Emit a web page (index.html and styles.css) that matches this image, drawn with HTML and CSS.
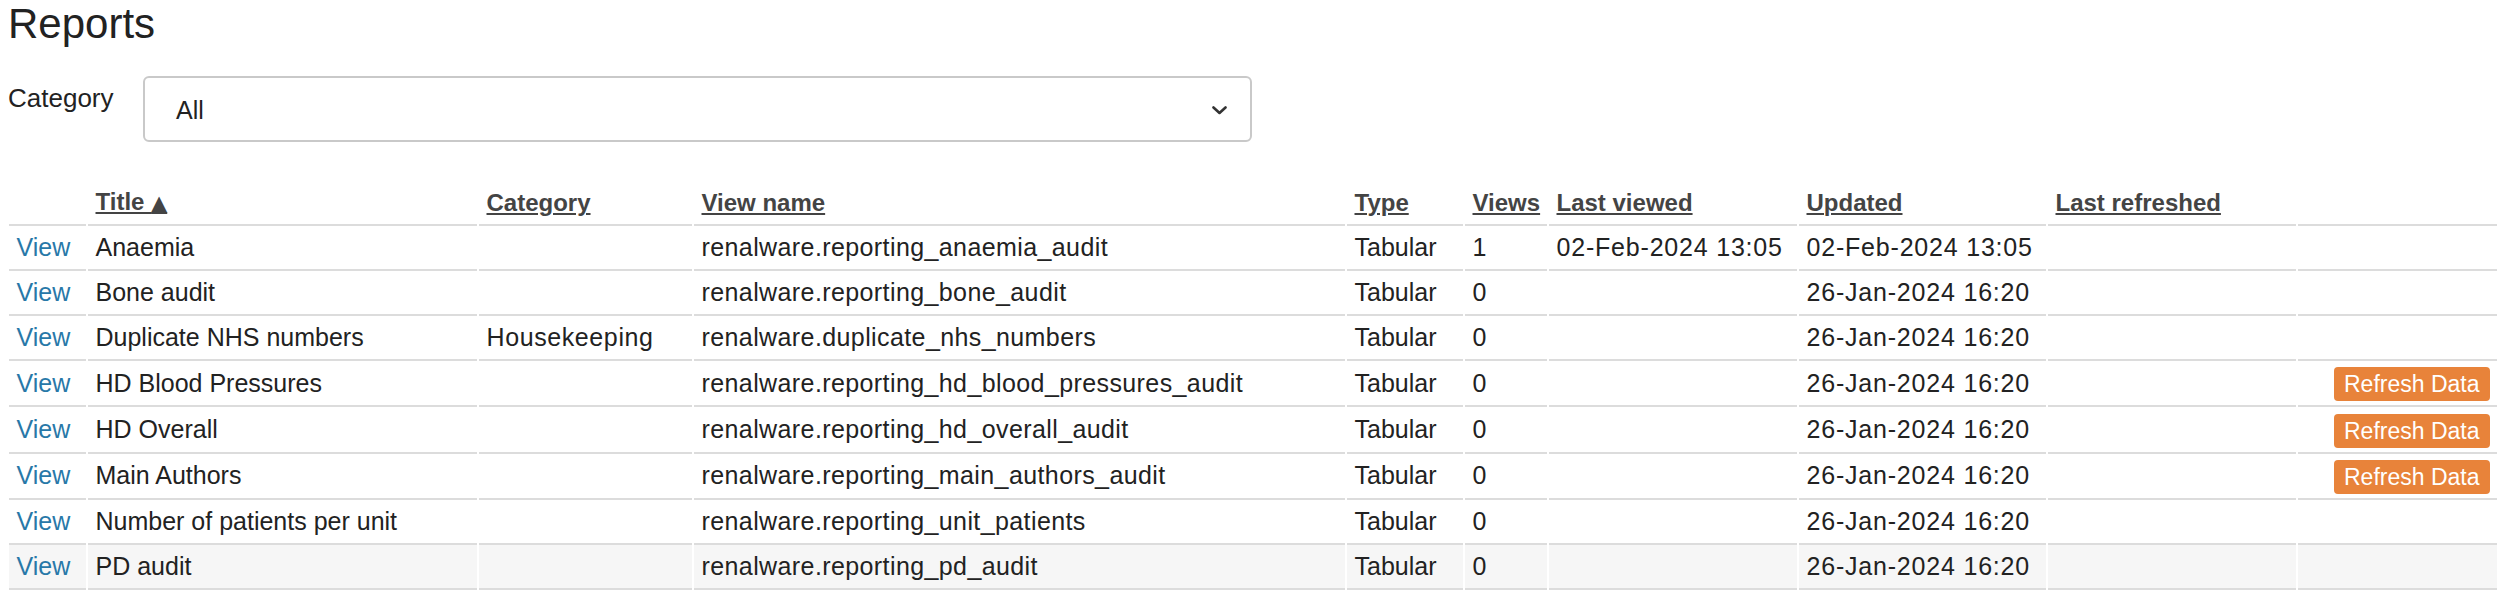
FILE: index.html
```html
<!DOCTYPE html>
<html lang="en">
<head>
<meta charset="utf-8">
<title>Reports</title>
<link rel="stylesheet" href="styles.css">
</head>
<body>
<div class="page">
  <h1 class="page-title">Reports</h1>
  <div class="filter">
    <label class="filter-label">Category</label>
    <div class="select">
      <span class="select-value">All</span>
      <svg class="chevron" width="15" height="9" viewBox="0 0 15 9"><path d="M1.5 1.5 L7.5 7 L13.5 1.5" fill="none" stroke="#333" stroke-width="2.6" stroke-linecap="round" stroke-linejoin="round"/></svg>
    </div>
  </div>
  <table class="reports">
    <thead>
      <tr>
        <th class="c-view"></th>
        <th class="c-title"><a href="#">Title <span class="sort">&#9650;</span></a></th>
        <th class="c-cat"><a href="#">Category</a></th>
        <th class="c-vname"><a href="#">View name</a></th>
        <th class="c-type"><a href="#">Type</a></th>
        <th class="c-views"><a href="#">Views</a></th>
        <th class="c-lview"><a href="#">Last viewed</a></th>
        <th class="c-upd"><a href="#">Updated</a></th>
        <th class="c-lref"><a href="#">Last refreshed</a></th>
        <th class="c-act"></th>
      </tr>
    </thead>
    <tbody>
      <tr>
        <td><a class="link" href="#">View</a></td><td>Anaemia</td><td class="cat"></td><td class="vname">renalware.reporting_anaemia_audit</td><td>Tabular</td><td>1</td><td class="date">02-Feb-2024 13:05</td><td class="date">02-Feb-2024 13:05</td><td></td><td></td>
      </tr>
      <tr>
        <td><a class="link" href="#">View</a></td><td>Bone audit</td><td class="cat"></td><td class="vname">renalware.reporting_bone_audit</td><td>Tabular</td><td>0</td><td></td><td class="date">26-Jan-2024 16:20</td><td></td><td></td>
      </tr>
      <tr>
        <td><a class="link" href="#">View</a></td><td>Duplicate NHS numbers</td><td class="cat">Housekeeping</td><td class="vname">renalware.duplicate_nhs_numbers</td><td>Tabular</td><td>0</td><td></td><td class="date">26-Jan-2024 16:20</td><td></td><td></td>
      </tr>
      <tr>
        <td><a class="link" href="#">View</a></td><td>HD Blood Pressures</td><td class="cat"></td><td class="vname">renalware.reporting_hd_blood_pressures_audit</td><td>Tabular</td><td>0</td><td></td><td class="date">26-Jan-2024 16:20</td><td></td><td class="act"><a class="btn" href="#">Refresh Data</a></td>
      </tr>
      <tr>
        <td><a class="link" href="#">View</a></td><td>HD Overall</td><td class="cat"></td><td class="vname">renalware.reporting_hd_overall_audit</td><td>Tabular</td><td>0</td><td></td><td class="date">26-Jan-2024 16:20</td><td></td><td class="act"><a class="btn" href="#">Refresh Data</a></td>
      </tr>
      <tr>
        <td><a class="link" href="#">View</a></td><td>Main Authors</td><td class="cat"></td><td class="vname">renalware.reporting_main_authors_audit</td><td>Tabular</td><td>0</td><td></td><td class="date">26-Jan-2024 16:20</td><td></td><td class="act"><a class="btn" href="#">Refresh Data</a></td>
      </tr>
      <tr>
        <td><a class="link" href="#">View</a></td><td>Number of patients per unit</td><td class="cat"></td><td class="vname">renalware.reporting_unit_patients</td><td>Tabular</td><td>0</td><td></td><td class="date">26-Jan-2024 16:20</td><td></td><td></td>
      </tr>
      <tr class="is-hover">
        <td><a class="link" href="#">View</a></td><td>PD audit</td><td class="cat"></td><td class="vname">renalware.reporting_pd_audit</td><td>Tabular</td><td>0</td><td></td><td class="date">26-Jan-2024 16:20</td><td></td><td></td>
      </tr>
    </tbody>
  </table>
</div>
</body>
</html>
```
FILE: styles.css
```css
html, body {
  margin: 0;
  padding: 0;
  background: #fff;
}
body {
  font-family: "Liberation Sans", Arial, Helvetica, sans-serif;
  color: #222;
  font-size: 25px;
}
.page {
  padding: 1px 16px 0 8px;
}
.page-title {
  margin: 0;
  font-size: 42px;
  font-weight: normal;
  line-height: 46px;
  color: #222;
}
.filter {
  display: flex;
  align-items: flex-start;
  margin-top: 29px;
}
.filter-label {
  width: 135px;
  flex: none;
  font-size: 26px;
  line-height: 30px;
  padding-top: 7px;
}
.select {
  box-sizing: border-box;
  width: 1109px;
  height: 66px;
  border: 2px solid #c9c9c9;
  border-radius: 6px;
  display: flex;
  align-items: center;
  justify-content: space-between;
  padding: 0 23px 0 31px;
  background: #fff;
}
.select-value {
  font-size: 25px;
  line-height: 30px;
  padding-top: 2px;
}
.chevron {
  display: block;
  margin-top: 2px;
}
.reports {
  margin-top: 37px;
  margin-left: -1px;
  width: 2492px;
  table-layout: fixed;
  border-collapse: separate;
  border-spacing: 2px 0;
}
.reports th,
.reports td {
  padding: 4px 7.5px;
  line-height: 35px;
  text-align: left;
  vertical-align: middle;
  white-space: nowrap;
  overflow: hidden;
}
.reports th {
  font-size: 24px;
  font-weight: bold;
  padding-top: 5px;
  padding-bottom: 3px;
}
.reports th a {
  color: #444;
  text-decoration: underline;
  text-decoration-thickness: 2px;
  text-underline-offset: 2px;
}
.sort {
  font-size: 21px;
  font-family: "DejaVu Sans", sans-serif;
}
.reports td {
  font-size: 25px;
  border-top: 2px solid #dcdcdc;
  color: #222;
}
.reports td.date {
  letter-spacing: 0.8px;
}
.reports td.vname {
  letter-spacing: 0.4px;
}
.reports td.cat {
  letter-spacing: 0.6px;
}
.reports tbody tr:last-child td {
  border-bottom: 2px solid #dcdcdc;
}
.reports tr.is-hover td {
  background: #f6f6f6;
}
.c-view { width: 62px; }
.c-title { width: 374px; }
.c-cat { width: 198px; }
.c-vname { width: 636px; }
.c-type { width: 101px; }
.c-views { width: 67px; }
.c-lview { width: 233px; }
.c-upd { width: 232px; }
.c-lref { width: 233px; }
.c-act { width: 184px; }
.link {
  color: #2878a8;
  text-decoration: none;
}
.act {
  text-align: right !important;
}
.btn {
  display: inline-block;
  background: #e8833a;
  color: #fff;
  font-size: 23px;
  line-height: 34px;
  padding: 0 10px;
  border-radius: 4px;
  text-decoration: none;
  vertical-align: middle;
}
```
